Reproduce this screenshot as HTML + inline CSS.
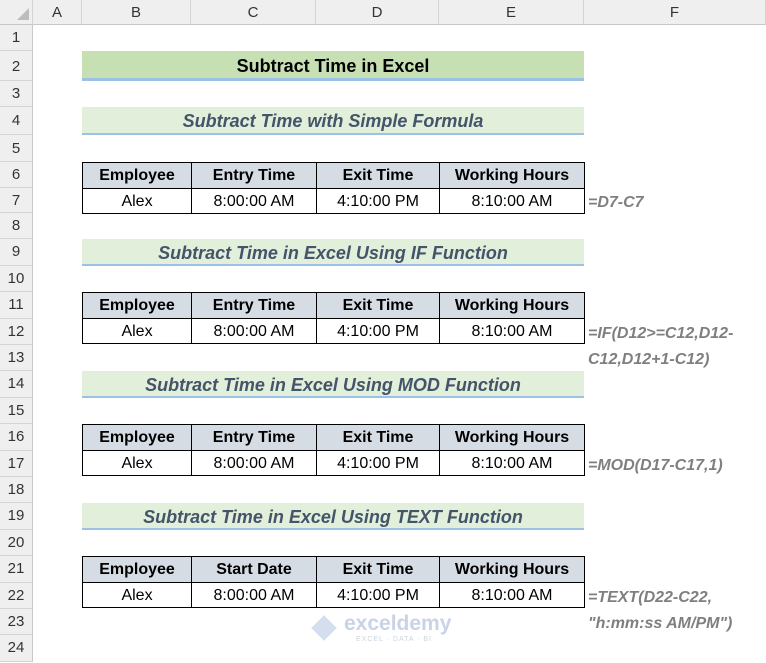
<!DOCTYPE html>
<html><head><meta charset="utf-8"><style>
*{margin:0;padding:0;box-sizing:border-box}
body{width:766px;height:663px;overflow:hidden;background:#fff;font-family:"Liberation Sans",sans-serif;position:relative}
.a{position:absolute}
.ch{position:absolute;top:0;height:25px;background:#efefef;border-right:1px solid #d4d4d4;border-bottom:1px solid #c8c8c8;font-size:15px;color:#333;text-align:center;line-height:25px}
.rh{position:absolute;left:0;width:33px;background:#efefef;border-bottom:1px solid #d4d4d4;border-right:1px solid #c8c8c8;font-size:15px;color:#333;text-align:center}
.t{position:absolute;left:82px;width:502px;text-align:center;font-weight:bold}
.t1{background:#c6e0b4;border-bottom:3px solid #9bc2e6;font-size:18px;color:#000}
.t2{background:#e2efda;border-bottom:2px solid #9bc2e6;font-size:18px;color:#44546a;font-style:italic}
table{position:absolute;left:82px;border-collapse:collapse;font-size:16px}
td{border:1.5px solid #000;text-align:center;padding:2px 0 0 0;height:25.5px}
tr.h td{background:#d6dce4;font-weight:bold}
.f{position:absolute;left:588px;color:#7f7f7f;font-weight:bold;font-style:italic;font-size:16px;line-height:26px}
</style></head><body>
<div class="ch" style="left:0;width:33px"></div>
<div class="a" style="left:17px;top:8px;width:0;height:0;border-left:12px solid transparent;border-bottom:12px solid #bcbcbc"></div>
<div class="ch" style="left:33px;width:49px">A</div>
<div class="ch" style="left:82px;width:109px">B</div>
<div class="ch" style="left:191px;width:125px">C</div>
<div class="ch" style="left:316px;width:123px">D</div>
<div class="ch" style="left:439px;width:145px">E</div>
<div class="ch" style="left:584px;width:182px">F</div>

<div class="rh" style="top:25px;height:26px;line-height:26px">1</div>
<div class="rh" style="top:51px;height:30px;line-height:32px">2</div>
<div class="rh" style="top:81px;height:26px;line-height:26px">3</div>
<div class="rh" style="top:107px;height:28px;line-height:28px">4</div>
<div class="rh" style="top:135px;height:27px;line-height:27px">5</div>
<div class="rh" style="top:162px;height:26px;line-height:26px">6</div>
<div class="rh" style="top:188px;height:25px;line-height:25px">7</div>
<div class="rh" style="top:213px;height:26.4px;line-height:26px">8</div>
<div class="rh" style="top:239.4px;height:26.4px;line-height:26px">9</div>
<div class="rh" style="top:265.8px;height:26.4px;line-height:26px">10</div>
<div class="rh" style="top:292.2px;height:26.4px;line-height:26px">11</div>
<div class="rh" style="top:318.6px;height:26.4px;line-height:26px">12</div>
<div class="rh" style="top:345px;height:26.4px;line-height:26px">13</div>
<div class="rh" style="top:371.4px;height:26.4px;line-height:26px">14</div>
<div class="rh" style="top:397.8px;height:26.4px;line-height:26px">15</div>
<div class="rh" style="top:424.2px;height:26.4px;line-height:26px">16</div>
<div class="rh" style="top:450.6px;height:26.4px;line-height:26px">17</div>
<div class="rh" style="top:477px;height:26.4px;line-height:26px">18</div>
<div class="rh" style="top:503.4px;height:26.4px;line-height:26px">19</div>
<div class="rh" style="top:529.8px;height:26.4px;line-height:26px">20</div>
<div class="rh" style="top:556.2px;height:26.4px;line-height:26px">21</div>
<div class="rh" style="top:582.6px;height:26.4px;line-height:26px">22</div>
<div class="rh" style="top:609px;height:26.4px;line-height:26px">23</div>
<div class="rh" style="top:635.4px;height:26.4px;line-height:26px">24</div>

<div class="t t1" style="top:51px;height:30px;line-height:31px">Subtract Time in Excel</div>
<div class="t t2" style="top:107px;height:28px;line-height:29px">Subtract Time with Simple Formula</div>
<div class="t t2" style="top:239px;height:27px;line-height:28px">Subtract Time in Excel Using IF Function</div>
<div class="t t2" style="top:371px;height:27px;line-height:28px">Subtract Time in Excel Using MOD Function</div>
<div class="t t2" style="top:503px;height:27px;line-height:28px">Subtract Time in Excel Using TEXT Function</div>

<table style="top:162px"><colgroup><col style="width:109px"><col style="width:125px"><col style="width:123px"><col style="width:145px"></colgroup>
<tr class="h"><td>Employee</td><td>Entry Time</td><td>Exit Time</td><td>Working Hours</td></tr>
<tr><td>Alex</td><td>8:00:00 AM</td><td>4:10:00 PM</td><td>8:10:00 AM</td></tr></table>
<table style="top:292px"><colgroup><col style="width:109px"><col style="width:125px"><col style="width:123px"><col style="width:145px"></colgroup>
<tr class="h"><td>Employee</td><td>Entry Time</td><td>Exit Time</td><td>Working Hours</td></tr>
<tr><td>Alex</td><td>8:00:00 AM</td><td>4:10:00 PM</td><td>8:10:00 AM</td></tr></table>
<table style="top:424px"><colgroup><col style="width:109px"><col style="width:125px"><col style="width:123px"><col style="width:145px"></colgroup>
<tr class="h"><td>Employee</td><td>Entry Time</td><td>Exit Time</td><td>Working Hours</td></tr>
<tr><td>Alex</td><td>8:00:00 AM</td><td>4:10:00 PM</td><td>8:10:00 AM</td></tr></table>
<table style="top:556px"><colgroup><col style="width:109px"><col style="width:125px"><col style="width:123px"><col style="width:145px"></colgroup>
<tr class="h"><td>Employee</td><td>Start Date</td><td>Exit Time</td><td>Working Hours</td></tr>
<tr><td>Alex</td><td>8:00:00 AM</td><td>4:10:00 PM</td><td>8:10:00 AM</td></tr></table>

<div class="f" style="top:190px">=D7-C7</div>
<div class="f" style="top:321px">=IF(D12&gt;=C12,D12-<br>C12,D12+1-C12)</div>
<div class="f" style="top:453px">=MOD(D17-C17,1)</div>
<div class="f" style="top:585px">=TEXT(D22-C22,<br>"h:mm:ss AM/PM")</div>

<div class="a" style="left:312px;top:616px;width:24px;height:24px;background:#c9d6ea;transform:rotate(45deg) scale(.75);opacity:.8"></div>
<div class="a" style="left:344px;top:612px;font-size:21px;font-weight:bold;color:#c9d3e6">exceldemy</div>
<div class="a" style="left:356px;top:636px;font-size:7px;color:#ccd3e0;letter-spacing:1px">EXCEL · DATA · BI</div>
</body></html>
